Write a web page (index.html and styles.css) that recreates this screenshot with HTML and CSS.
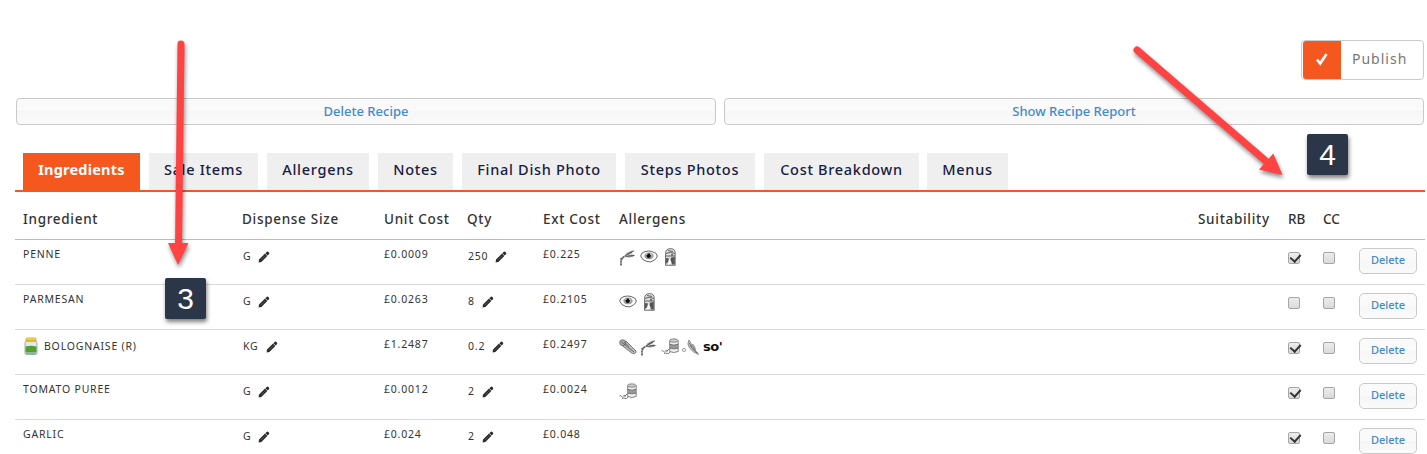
FILE: index.html
```html
<!DOCTYPE html>
<html lang="en">
<head>
  <meta charset="UTF-8" />
  <meta name="viewport" content="width=device-width, initial-scale=1.0" />
  <title>Recipe</title>
  <link rel="stylesheet" href="styles.css">
</head>
<body>
  <!-- Icons -->
  <svg class="sprite" aria-hidden="true">
    <symbol id="pencil" viewBox="0 0 12 12">
      <path d="M.6 11.400 1 8.600 7 2.600 9.300 4.900 3.400 10.900zM7.400 2.200 8.600 1q.9-.8 1.800 0l.5.500q.8.9 0 1.800L9.700 4.500z" fill="#2b2b2b"/>
      <path d="M2.600 9.400 7.200 4.800" stroke="#777" stroke-width=".5"/>
    </symbol>
    <symbol id="wheat" viewBox="0 0 18 18">
      <g fill="none" stroke="#666">
        <path d="M2 17.500 2 13Q3 9 7 8" stroke-width="1.800" stroke-dasharray="2.200 .5"/>
        <path d="M1 11 5 9" stroke-width="1"/>
      </g>
      <path d="M5.500 8Q8.500 2.500 15.500 2.500Q13 5.500 8.500 7zM6.500 9Q11 5 16.500 7.200Q12 10.500 6.500 9z" fill="#999"/>
      <path d="M6 8 14.500 3M7 8.300l8-.8M9 5l1 1.500M11.500 4l.5 1.500" stroke="#444" stroke-width=".8"/>
    </symbol>
    <symbol id="egg" viewBox="0 0 18 18">
      <path d="M.7 8Q1 4.500 5 3.500T12 3.500Q17.500 5 17.300 8Q17 10 14.500 12Q11 15 7 13.500Q2 12.500.7 8z" fill="#fff" stroke="#555" stroke-width=".9"/>
      <ellipse cx="9" cy="7.900" rx="4.200" ry="3" fill="#aaa" stroke="#666" stroke-width=".5"/>
      <circle cx="8.700" cy="7.800" r="2.200" fill="#111"/>
      <path d="M6 5.500 7.500 7M10 6l1.500 1" stroke="#eee" stroke-width=".8"/>
    </symbol>
    <symbol id="milk" viewBox="0 0 18 18">
      <path d="M4.500 17.300V5.500Q4.500.6 9.500.6t4.700 4.900v11.800z" fill="#ddd" stroke="#555" stroke-width=".8"/>
      <path d="M5 5.500Q9 3 14 5.500M5 8h9M7 2.500l5 1" fill="none" stroke="#555" stroke-width=".9"/>
      <path d="M5 16V10l3 .5L7 14zM10 9.500l3.800-.5v7.500H11L9.500 12z" fill="#555"/>
      <path d="M8.500 10.500 10.500 15 7 17z" fill="#fff"/>
      <circle cx="11" cy="6.700" r="1" fill="#555"/>
    </symbol>
    <symbol id="celery" viewBox="0 0 18 18">
      <path d="M4 4 7 3l10 10q.5 2-1.500 2.700Q13 15.500 12 14.500L3.500 8z" fill="#bbb" stroke="#666" stroke-width=".8"/>
      <circle cx="3.700" cy="4.700" r="3" fill="#aaa" stroke="#666" stroke-width=".8"/>
      <path d="M2.500 4 8 8.500 15 14M5 4l5 4.500" fill="none" stroke="#555" stroke-width=".8"/>
    </symbol>
    <symbol id="sulphite" viewBox="0 0 18 18">
      <path d="M8.700 2.500v11q4 2 8.500 0v-11" fill="#eee" stroke="#666" stroke-width=".8"/>
      <ellipse cx="12.800" cy="2.500" rx="4.200" ry="1.700" fill="#ccc" stroke="#666" stroke-width=".7"/>
      <path d="M8.700 6.500q4 1.500 8.500 0v3.300q-4 1.500-8.500 0z" fill="#999"/>
      <path d="M8.700 6.300q4 1.700 8.500 0M8.700 10q4 1.700 8.500 0" fill="none" stroke="#555" stroke-width=".8"/>
      <path d="M.5 13q1.500-1 2 .5t2-.5 1.500 1M3 15.500q2-1 3 0t3-1.500M6 13l2-2" fill="none" stroke="#777" stroke-width="1"/>
    </symbol>
    <symbol id="mustard" viewBox="0 0 18 18">
      <circle cx="2" cy="12" r="1.600" fill="#fff" stroke="#777" stroke-width=".7"/>
      <path d="M7 2Q4.500 6 7.500 10T16.500 16.500q-.5-2.500-3-3.500Q13.500 8 10.500 6L9.500 8.500Q9.500 5 7 2z" fill="#ccc" stroke="#777" stroke-width=".8"/>
      <path d="M7.300 5Q9 11 15 15M10.500 8l2 4" fill="none" stroke="#555" stroke-width=".8"/>
    </symbol>
    <symbol id="jar" viewBox="0 0 14 18">
      <path d="M1 6Q1.500 4 3 4h8q1.500 0 2 2v10q0 1.500-1.500 1.500h-9Q1 17.500 1 16z" fill="#dfe9ef" stroke="#7f9db5" stroke-width=".8"/>
      <path d="M1.500 9.500Q7 8 12.500 9.500V15h-11z" fill="#55a02c"/>
      <path d="M2 15h10v2H2z" fill="#93b98a"/>
      <rect x="1.500" y=".5" width="11" height="4.500" rx="1.500" fill="#dfb929"/>
      <path d="M2.500 2h9" stroke="#f3dc77"/>
    </symbol>
  </svg>

  <div class="page">
    <div class="top-bar">
      <label class="publish"><span class="publish-check"><svg viewBox="0 0 14 14"><path d="M2 7.500 5.200 11.500 11.500 2" /></svg></span><span class="publish-text">Publish</span></label>
    </div>

    <div class="actions">
      <button class="btn btn-wide">Delete Recipe</button>
      <button class="btn btn-wide">Show Recipe Report</button>
    </div>

    <ul class="tabs">
      <li class="tab active">Ingredients</li>
      <li class="tab sale">Sale Items</li>
      <li class="tab allergens">Allergens</li>
      <li class="tab notes">Notes</li>
      <li class="tab dish">Final Dish Photo</li>
      <li class="tab steps">Steps Photos</li>
      <li class="tab cost">Cost Breakdown</li>
      <li class="tab menus">Menus</li>
    </ul>

    <table class="ingredients">
      <colgroup>
        <col class="c-name"><col class="c-size"><col class="c-unit"><col class="c-qty"><col class="c-ext">
        <col class="c-allergens"><col class="c-suit"><col class="c-rb"><col class="c-cc"><col class="c-del">
      </colgroup>
      <thead>
        <tr><th>Ingredient</th><th>Dispense Size</th><th>Unit Cost</th><th>Qty</th><th>Ext Cost</th><th>Allergens</th><th>Suitability</th><th class="short">RB</th><th class="short">CC</th><th></th></tr>
      </thead>
      <tbody>
        <tr>
          <td>PENNE</td>
          <td><div class="edit">G<svg class="pen"><use href="#pencil"/></svg></div></td>
          <td>£0.0009</td>
          <td><div class="edit">250<svg class="pen"><use href="#pencil"/></svg></div></td>
          <td>£0.225</td>
          <td><div class="icons"><svg><use href="#wheat"/></svg><svg><use href="#egg"/></svg><svg><use href="#milk"/></svg></div></td>
          <td></td>
          <td><input type="checkbox" class="check" checked></td>
          <td><input type="checkbox" class="check"></td>
          <td><button class="btn btn-small">Delete</button></td>
        </tr>
        <tr>
          <td>PARMESAN</td>
          <td><div class="edit">G<svg class="pen"><use href="#pencil"/></svg></div></td>
          <td>£0.0263</td>
          <td><div class="edit">8<svg class="pen"><use href="#pencil"/></svg></div></td>
          <td>£0.2105</td>
          <td><div class="icons"><svg><use href="#egg"/></svg><svg><use href="#milk"/></svg></div></td>
          <td></td>
          <td><input type="checkbox" class="check"></td>
          <td><input type="checkbox" class="check"></td>
          <td><button class="btn btn-small">Delete</button></td>
        </tr>
        <tr>
          <td><div class="sub-recipe"><svg class="jar"><use href="#jar"/></svg>BOLOGNAISE (R)</div></td>
          <td><div class="edit">KG<svg class="pen"><use href="#pencil"/></svg></div></td>
          <td>£1.2487</td>
          <td><div class="edit">0.2<svg class="pen"><use href="#pencil"/></svg></div></td>
          <td>£0.2497</td>
          <td><div class="icons"><svg><use href="#celery"/></svg><svg><use href="#wheat"/></svg><svg><use href="#sulphite"/></svg><svg><use href="#mustard"/></svg><span class="soya">so'</span></div></td>
          <td></td>
          <td><input type="checkbox" class="check" checked></td>
          <td><input type="checkbox" class="check"></td>
          <td><button class="btn btn-small">Delete</button></td>
        </tr>
        <tr>
          <td>TOMATO PUREE</td>
          <td><div class="edit">G<svg class="pen"><use href="#pencil"/></svg></div></td>
          <td>£0.0012</td>
          <td><div class="edit">2<svg class="pen"><use href="#pencil"/></svg></div></td>
          <td>£0.0024</td>
          <td><div class="icons"><svg><use href="#sulphite"/></svg></div></td>
          <td></td>
          <td><input type="checkbox" class="check" checked></td>
          <td><input type="checkbox" class="check"></td>
          <td><button class="btn btn-small">Delete</button></td>
        </tr>
        <tr>
          <td>GARLIC</td>
          <td><div class="edit">G<svg class="pen"><use href="#pencil"/></svg></div></td>
          <td>£0.024</td>
          <td><div class="edit">2<svg class="pen"><use href="#pencil"/></svg></div></td>
          <td>£0.048</td>
          <td></td>
          <td></td>
          <td><input type="checkbox" class="check" checked></td>
          <td><input type="checkbox" class="check"></td>
          <td><button class="btn btn-small">Delete</button></td>
        </tr>
      </tbody>
    </table>
  </div>

  <!-- Step markers -->
  <svg class="arrows" viewBox="0 0 1427 454">
    <g stroke="#ff4343" stroke-width="7" stroke-linecap="round" fill="#ff4343">
      <path d="M181 44 178.500 246"/>
      <path d="M1137 50 1267 162"/>
      <path stroke="none" d="M168 243h20.500L178 265zM1273.300 153.500 1259 169.500 1282.500 175z"/>
    </g>
  </svg>
  <div class="step step-3">3</div>
  <div class="step step-4">4</div>
</body>
</html>
```
FILE: styles.css
```css
* {
  box-sizing: border-box;
}
body {
  margin: 0;
  height: 454px;
  overflow: hidden;
  position: relative;
  background: #fff;
  color: #333;
  font-family: 'Noto Sans', 'Open Sans', sans-serif;
}
.sprite {
  display: none;
}
.page {
  padding: 40px 2px 0 15px;
}

/* Publish */
.top-bar {
  display: flex;
  justify-content: flex-end;
  padding-right: 1px;
}
.publish {
  display: flex;
  width: 123px;
  height: 40px;
  padding-left: 1px;
  border: 1px solid #ccc;
  border-radius: 4px;
}
.publish-check {
  display: flex;
  align-items: center;
  justify-content: center;
  width: 38px;
  padding-bottom: 2px;
  background: #f4581e;
  border-radius: 3px 0 0 3px;
}
.publish-check svg {
  width: 14px;
  height: 14px;
  fill: none;
  stroke: #fff;
  stroke-width: 2.6;
}
.publish-text {
  padding-left: 11px;
  color: #777;
  font-size: 14px;
  line-height: 35px;
  letter-spacing: 1px;
}

/* Buttons */
.btn {
  border: 1px solid #c9c9c9;
  border-radius: 4px;
  background: linear-gradient(#fafafa 50%, #f6f6f6 50%, #fafafa);
  color: #428bca;
  font-family: inherit;
  font-weight: 500;
  padding: 0;
}
.actions {
  display: flex;
  gap: 8px;
  padding: 18px 1px 0;
}
.btn-wide {
  flex: 1;
  height: 27px;
  font-size: 13px;
  line-height: 25px;
}
.btn-small {
  display: block;
  width: 58px;
  height: 26px;
  padding-bottom: 2px;
  border-radius: 5px;
  font-size: 11px;
  line-height: 22px;
}

/* Tabs */
.tabs {
  display: flex;
  gap: 9px;
  margin: 28px 0 0;
  padding: 0 8px;
  list-style: none;
  border-bottom: 2px solid #f4581e;
}
.tab {
  width: 117px;
  height: 37px;
  background: #efefef;
  color: #172042;
  font-size: 14.5px;
  font-weight: 500;
  line-height: 33px;
  letter-spacing: .7px;
  text-align: center;
  white-space: nowrap;
}
.tab.active {
  background: #f4581e;
  color: #fff;
  font-weight: 700;
  letter-spacing: .2px;
}
.tab.sale { width: 109px; }
.tab.allergens { width: 102px; }
.tab.notes { width: 75px; }
.tab.dish { width: 154px; }
.tab.steps { width: 130px; }
.tab.cost { width: 155px; }
.tab.menus { width: 81px; margin-left: -1px; }

/* Ingredients table */
.ingredients {
  width: 1410px;
  table-layout: fixed;
  border-collapse: separate;
  border-spacing: 0;
}
.c-name { width: 219px; }
.c-size { width: 142px; }
.c-unit { width: 83px; }
.c-qty { width: 76px; }
.c-ext { width: 76px; }
.c-allergens { width: 579px; }
.c-suit { width: 90px; }
.c-rb { width: 35px; }
.c-cc { width: 36px; }
.c-del { width: 74px; }
.ingredients th {
  height: 48px;
  padding: 6px 0 0 8px;
  border-bottom: 1px solid #bbb;
  font-size: 13.5px;
  font-weight: 500;
  letter-spacing: .7px;
  text-align: left;
  white-space: nowrap;
}
.ingredients th.short {
  letter-spacing: 0;
}
.ingredients td {
  height: 45px;
  padding: 8px 0 0 8px;
  border-bottom: 1px solid #d9d9d9;
  font-size: 10.5px;
  line-height: 13px;
  letter-spacing: .8px;
  vertical-align: top;
  white-space: nowrap;
}
.edit {
  display: flex;
  align-items: center;
  padding: 2px 0 0 1px;
}
.pen {
  width: 12px;
  height: 12px;
  margin-left: 7px;
}
.sub-recipe {
  display: flex;
  align-items: center;
  gap: 5px;
  margin-top: -1px;
}
.jar {
  width: 16px;
  height: 18px;
}
.icons {
  display: flex;
  gap: 3px;
}
.icons svg {
  width: 18px;
  height: 18px;
}
.soya {
  color: #111;
  font: 700 13px/18px 'DejaVu Sans', sans-serif;
  letter-spacing: -.4px;
}
.check {
  appearance: none;
  display: block;
  position: relative;
  width: 12px;
  height: 12px;
  margin: 4px 0 0;
  border: 1px solid #a6a6a6;
  border-radius: 2px;
  background: linear-gradient(#ececec, #dadada);
}
.check:checked::after {
  content: '';
  position: absolute;
  left: 3px;
  top: 0;
  width: 5px;
  height: 8px;
  border: solid #333;
  border-width: 0 2px 2px 0;
  transform: translateY(-1px) rotate(42deg);
}

/* Step markers */
.arrows {
  position: absolute;
  inset: 0;
  width: 1427px;
  height: 454px;
  filter: drop-shadow(1px 3px 2px rgba(0,0,0,0.45));
}
.step {
  position: absolute;
  width: 41px;
  height: 41px;
  border-radius: 2px;
  background: #2b3648;
  box-shadow: 1px 3px 4px rgba(0,0,0,0.5);
  color: #fff;
  font: 30px/41px 'Liberation Sans', Arial, sans-serif;
  text-align: center;
}
.step-3 {
  left: 165px;
  top: 278px;
}
.step-4 {
  left: 1307px;
  top: 134px;
}
```
